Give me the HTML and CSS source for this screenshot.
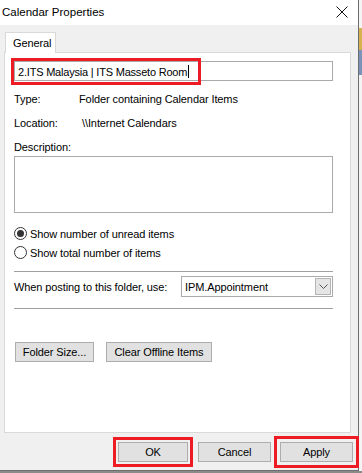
FILE: index.html
```html
<!DOCTYPE html>
<html lang="en">
<head>
    <meta charset="UTF-8">
    <title>Calendar Properties</title>
    <link rel="stylesheet" href="styles.css">
</head>
<body>
    <div class="dialog">
        <div class="titlebar">
            <span class="title">Calendar Properties</span>
            <svg class="close" width="12" height="12" viewBox="0 0 12 12">
                <path d="M0.5 0.5 L11.5 11.5 M11.5 0.5 L0.5 11.5" stroke="#111" stroke-width="1" fill="none"/>
            </svg>
        </div>
        <div class="content">
            <div class="tabs">
                <div class="tab">General</div>
            </div>
            <div class="panel">
                <div class="name-wrap">
                    <div class="name-input">2.ITS Malaysia | ITS Masseto Room<span class="caret"></span></div>
                    <div class="mark mark-name"></div>
                </div>
                <div class="info-row">
                    <span class="info-label">Type:</span>
                    <span class="info-value">Folder containing Calendar Items</span>
                </div>
                <div class="info-row">
                    <span class="info-label">Location:</span>
                    <span class="info-value loc">\\Internet Calendars</span>
                </div>
                <div class="info-row">
                    <span class="info-label">Description:</span>
                </div>
                <div class="desc"></div>
                <div class="radios">
                    <div class="radio-row"><span class="radio checked"></span>Show number of unread items</div>
                    <div class="radio-row"><span class="radio"></span>Show total number of items</div>
                </div>
                <div class="sep"></div>
                <div class="post-row">
                    <span>When posting to this folder, use:</span>
                    <div class="select">
                        <span>IPM.Appointment</span>
                        <span class="select-btn">
                            <svg width="9" height="5" viewBox="0 0 9 5"><path d="M0.5 0.5 L4.5 4.5 L8.5 0.5" stroke="#555" fill="none"/></svg>
                        </span>
                    </div>
                </div>
                <div class="sep"></div>
                <div class="panel-buttons">
                    <button class="btn folder-size">Folder Size...</button>
                    <button class="btn clear-offline">Clear Offline Items</button>
                </div>
            </div>
            <div class="footer">
                <button class="btn ok marked">OK</button>
                <button class="btn cancel">Cancel</button>
                <button class="btn apply marked-wide">Apply</button>
            </div>
        </div>
    </div>
</body>
</html>
```

FILE: styles.css
```css
body {
    margin: 0;
    width: 362px;
    height: 473px;
    overflow: hidden;
    font-family: "Liberation Sans", Arial, sans-serif;
    font-size: 11px;
    letter-spacing: -0.1px;
    color: #000;
    white-space: nowrap;
    background:
        linear-gradient(#d6b24e, #d6b24e) 359px 28px / 3px 22px no-repeat,
        linear-gradient(#7b93b8, #7b93b8) 359px 50px / 3px 25px no-repeat,
        linear-gradient(#8a8a8a, #8a8a8a) 0 471px / 362px 2px no-repeat,
        #f4f4f4;
}
.dialog {
    width: 358px;
    height: 470px;
    background: #f0f0f0;
    border-right: 1px solid #6d6d6d;
    border-bottom: 1px solid #6d6d6d;
    display: flex;
    flex-direction: column;
}
.titlebar {
    height: 25px;
    background: #fff;
    display: flex;
    align-items: center;
    justify-content: space-between;
    padding: 0 10px 0 2px;
    font-size: 11.5px;
    letter-spacing: 0;
}
.title {
    margin-top: -2px;
}
.close {
    margin-top: -1px;
}
.content {
    padding: 7px 0 0 4px;
}
.tabs {
    display: flex;
    height: 20px;
    padding-left: 1px;
}
.tab {
    width: 51px;
    height: 21px;
    background: #fff;
    border: 1px solid #d9d9d9;
    border-bottom: none;
    box-sizing: border-box;
    padding: 4px 0 0 7px;
    position: relative;
    z-index: 1;
}
.panel {
    width: 347px;
    height: 381px;
    box-sizing: border-box;
    background: #fff;
    border: 1px solid #d9d9d9;
    padding: 8px 0 0 9px;
}
.name-wrap {
    position: relative;
    width: 319px;
}
.name-input {
    height: 20px;
    box-sizing: border-box;
    border: 1px solid #aaaaaa;
    padding: 1px 0 0 3px;
    display: flex;
    align-items: center;
    letter-spacing: -0.2px;
}
.caret {
    display: inline-block;
    width: 1px;
    height: 13px;
    background: #000;
    margin-left: 1px;
}
.mark {
    position: absolute;
    border: 3px solid #ed1c24;
}
.mark-name {
    left: -3px;
    top: -3px;
    width: 184px;
    height: 21px;
}
.info-row {
    height: 24px;
    display: flex;
    align-items: center;
}
.name-wrap + .info-row {
    margin-top: 6px;
}
.info-label {
    width: 65px;
}
.loc {
    margin-left: 3px;
}
.desc {
    width: 319px;
    height: 57px;
    box-sizing: border-box;
    border: 1px solid #aaaaaa;
    margin-top: -3px;
}
.radios {
    margin-top: 11px;
}
.radio-row {
    height: 19px;
    display: flex;
    align-items: center;
}
.radio {
    width: 13px;
    height: 13px;
    box-sizing: border-box;
    border: 1px solid #333;
    border-radius: 50%;
    margin-right: 3px;
    display: flex;
    align-items: center;
    justify-content: center;
}
.radio.checked::after {
    content: "";
    width: 7px;
    height: 7px;
    border-radius: 50%;
    background: #333;
}
.sep {
    width: 319px;
    height: 1px;
    background: #a0a0a0;
}
.radios + .sep {
    margin-top: 9px;
}
.post-row {
    height: 21px;
    margin: 4px 0 11px;
    display: flex;
    align-items: center;
    justify-content: space-between;
    width: 319px;
}
.select {
    width: 152px;
    height: 21px;
    box-sizing: border-box;
    border: 1px solid #aaaaaa;
    display: flex;
    align-items: center;
    justify-content: space-between;
    padding: 0 1px 0 3px;
}
.select-btn {
    width: 16px;
    height: 17px;
    box-sizing: border-box;
    background: #e5e5e5;
    border: 1px solid #b5b5b5;
    display: flex;
    align-items: center;
    justify-content: center;
}
.panel-buttons {
    margin-top: 33px;
    display: flex;
    gap: 12px;
    padding-left: 1px;
}
.btn {
    font-family: inherit;
    font-size: 11px;
    letter-spacing: -0.1px;
    color: #000;
    height: 20px;
    background: #e1e1e1;
    border: 1px solid #adadad;
    padding: 0 4px;
    margin: 0;
    white-space: nowrap;
}
.folder-size {
    width: 79px;
}
.clear-offline {
    width: 106px;
}
.footer {
    display: flex;
    padding: 9px 0 0 114px;
    gap: 10px;
}
.footer .btn {
    width: 70px;
    height: 20px;
}
.footer .cancel {
    width: 73px;
}
.footer .apply {
    width: 73px;
    margin-left: -1px;
}
.marked {
    outline: 3px solid #ed1c24;
    outline-offset: 2px;
}
.marked-wide {
    outline: 3px solid #ed1c24;
    outline-offset: 3px;
}
```
